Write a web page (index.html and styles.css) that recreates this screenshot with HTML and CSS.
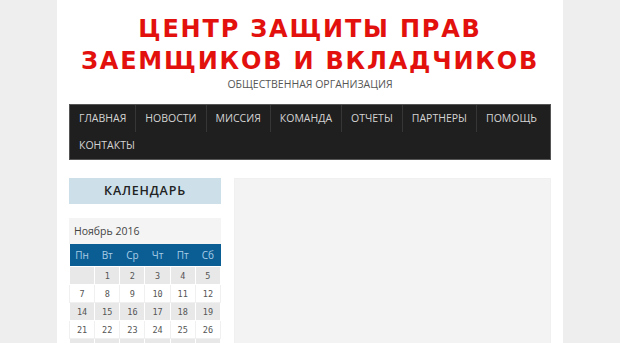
FILE: index.html
```html
<!DOCTYPE html>
<html lang="ru">
<head>
<meta charset="utf-8">
<title>Центр защиты прав заемщиков и вкладчиков</title>
<link rel="stylesheet" href="styles.css">
</head>
<body>
<div class="page">
  <header class="site-header">
    <h1 class="site-title">ЦЕНТР ЗАЩИТЫ ПРАВ<br>ЗАЕМЩИКОВ И ВКЛАДЧИКОВ</h1>
    <p class="site-desc">ОБЩЕСТВЕННАЯ ОРГАНИЗАЦИЯ</p>
  </header>
  <nav class="main-nav">
    <a href="#">ГЛАВНАЯ</a>
    <a href="#">НОВОСТИ</a>
    <a href="#">МИССИЯ</a>
    <a href="#">КОМАНДА</a>
    <a href="#">ОТЧЕТЫ</a>
    <a href="#">ПАРТНЕРЫ</a>
    <a href="#">ПОМОЩЬ</a>
    <a href="#">КОНТАКТЫ</a>
  </nav>
  <div class="content">
    <aside class="sidebar">
      <h2 class="widget-title">КАЛЕНДАРЬ</h2>
      <div class="calendar">
        <div class="cal-caption">Ноябрь 2016</div>
        <table class="cal-table">
          <thead>
            <tr><th>Пн</th><th>Вт</th><th>Ср</th><th>Чт</th><th>Пт</th><th>Сб</th></tr>
          </thead>
          <tbody>
            <tr class="odd"><td></td><td>1</td><td>2</td><td>3</td><td>4</td><td>5</td></tr>
            <tr><td>7</td><td>8</td><td>9</td><td>10</td><td>11</td><td>12</td></tr>
            <tr class="odd"><td>14</td><td>15</td><td>16</td><td>17</td><td>18</td><td>19</td></tr>
            <tr><td>21</td><td>22</td><td>23</td><td>24</td><td>25</td><td>26</td></tr>
            <tr class="odd"><td>28</td><td>29</td><td>30</td><td></td><td></td><td></td></tr>
          </tbody>
        </table>
      </div>
    </aside>
    <main class="main-area"></main>
  </div>
</div>
</body>
</html>
```
FILE: styles.css
```css
html, body {
  margin: 0;
  padding: 0;
  background: #eeeeee;
  height: 100%;
  overflow: hidden;
}
.page {
  width: 506px;
  margin: 0 auto;
  background: #ffffff;
  min-height: 100%;
  padding: 0 12px;
  box-sizing: border-box;
}
.site-header {
  text-align: center;
  padding-top: 13px;
}
.site-title {
  margin: 0;
  font-family: "DejaVu Sans", sans-serif;
  font-weight: 700;
  font-size: 24px;
  line-height: 32px;
  letter-spacing: 1.8px;
  color: #e3110d;
}
.site-desc {
  margin: 0;
  font-family: "Open Sans", sans-serif;
  font-weight: 400;
  font-size: 10.5px;
  line-height: 14px;
  color: #555555;
}
.main-nav {
  margin-top: 13px;
  display: flex;
  flex-wrap: wrap;
  background: #1f1f1f;
  border: 1px solid #555555;
  height: 56px;
  box-sizing: border-box;
  align-content: flex-start;
}
.main-nav a {
  font-family: "Open Sans", sans-serif;
  font-size: 10.5px;
  color: #d4d4d4;
  text-decoration: none;
  height: 27px;
  line-height: 27px;
  padding: 0 9px;
  border-right: 1px solid #363636;
}
.main-nav a:nth-child(7),
.main-nav a:nth-child(8) {
  border-right: none;
}
.content {
  display: flex;
  gap: 13px;
  margin-top: 18px;
}
.sidebar {
  width: 152px;
  flex: none;
}
.widget-title {
  margin: 0;
  height: 26px;
  line-height: 26px;
  background: #cde0ea;
  text-align: center;
  font-family: "Open Sans", sans-serif;
  font-weight: 600;
  font-size: 12.5px;
  letter-spacing: 0.8px;
  color: #222222;
}
.calendar {
  margin-top: 14px;
  width: 152px;
}
.cal-caption {
  background: #f4f4f4;
  height: 26px;
  line-height: 26px;
  padding-left: 5px;
  font-family: "Open Sans", sans-serif;
  font-size: 10.5px;
  color: #444444;
}
.cal-table {
  border-collapse: collapse;
  table-layout: fixed;
  width: 152px;
}
.cal-table th {
  background: #0b5e94;
  color: #a9cde6;
  font-family: "Open Sans", sans-serif;
  font-weight: 400;
  font-size: 10px;
  height: 22px;
  padding: 0;
  text-align: center;
}
.cal-table td {
  height: 17px;
  padding: 0;
  text-align: center;
  font-family: "DejaVu Sans Mono", monospace;
  font-size: 8.5px;
  color: #555555;
  border: 1px solid #f0f0f0;
  background: #ffffff;
}
.cal-table tr.odd td {
  background: #e8e8e8;
  border-color: #ffffff;
}
.main-area {
  flex: 1;
  background: #f3f3f3;
  border: 1px solid #f0f0f0;
  height: 170px;
}
```
